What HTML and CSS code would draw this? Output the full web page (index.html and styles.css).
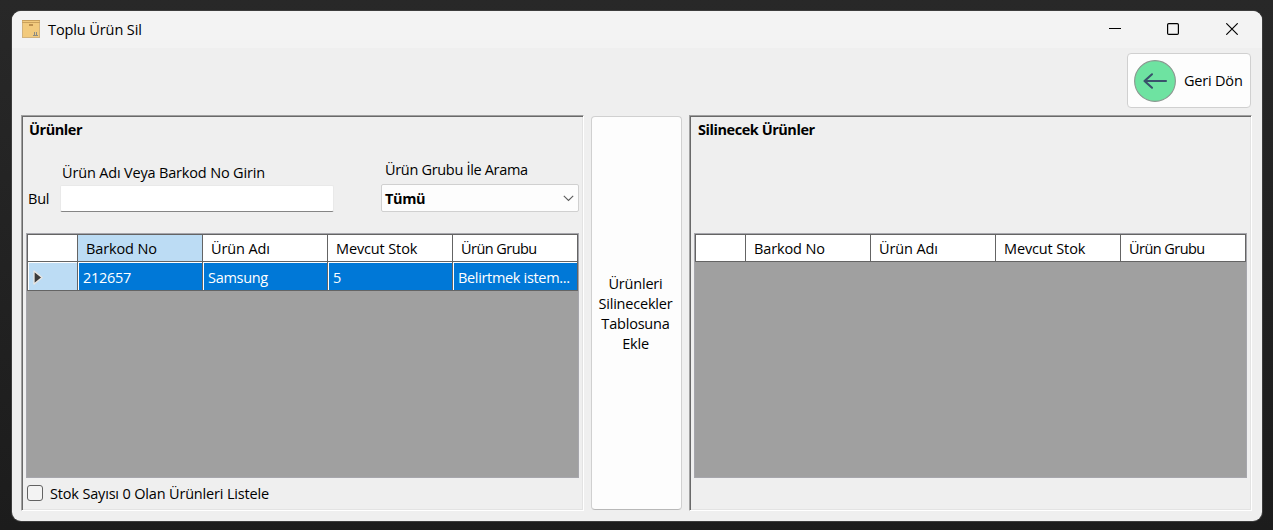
FILE: index.html
```
<!DOCTYPE html>
<html lang="tr">
<head>
<meta charset="utf-8">
<title>Toplu Ürün Sil</title>
<link rel="stylesheet" href="styles.css">
</head>
<body>
<div class="window">
  <header class="titlebar">
    <svg class="app-icon" width="18" height="18" viewBox="0 0 18 18">
      <rect x="0.5" y="0.5" width="17" height="17" fill="#f2ca7d" stroke="#d2b27c"/>
      <path d="M0 .5H18M0 2.5H18" stroke="#c9a05c"/>
      <path d="M7 5H11" stroke="#bd9150" stroke-width="2"/>
      <path d="M11 15.5H16M12.5 15V12M14.5 15V12" stroke="#8c8b83"/>
    </svg>
    <span class="title">Toplu Ürün Sil</span>
    <div class="controls">
      <svg width="12" height="12" viewBox="0 0 12 12"><path d="M0 5.5H12" stroke="#000"/></svg>
      <svg width="12" height="12" viewBox="0 0 12 12"><rect x=".6" y=".6" width="10.8" height="10.8" rx="1.2" fill="none" stroke="#000" stroke-width="1.2"/></svg>
      <svg width="12" height="12" viewBox="0 0 12 12"><path d="M.3 .3L11.7 11.7M11.7 .3L.3 11.7" stroke="#000" stroke-width="1.15"/></svg>
    </div>
  </header>
  <div class="toolbar">
    <button class="back">
      <svg width="42" height="42" viewBox="0 0 42 42">
        <circle cx="21" cy="21" r="20.4" fill="#6ee3a1" stroke="#8b9790" stroke-width="1.1"/>
        <path d="M32 21H10.5M18 14.3L10.5 21L18 27.7" fill="none" stroke="#39526b" stroke-width="2.1" stroke-linecap="round" stroke-linejoin="round"/>
      </svg>
      <span>Geri Dön</span>
    </button>
  </div>
  <main class="content">
    <section class="panel">
      <h2 class="panel-title">Ürünler</h2>
      <div class="filters">
        <span class="find">Bul</span>
        <div class="field search">
          <label for="q">Ürün Adı Veya Barkod No Girin</label>
          <input id="q" class="input" type="text">
        </div>
        <div class="field group">
          <label>Ürün Grubu İle Arama</label>
          <div class="select">
            <span>Tümü</span>
            <svg width="11" height="7" viewBox="0 0 11 7"><path d="M.8 .9L5.5 5.5L10.2 .9" fill="none" stroke="#5c5c5c" stroke-width="1.1"/></svg>
          </div>
        </div>
      </div>
      <div class="grid">
        <div class="row head">
          <div></div><div class="sorted">Barkod No</div><div>Ürün Adı</div><div>Mevcut Stok</div><div class="group-head">Ürün Grubu</div>
        </div>
        <div class="row data">
          <div class="marker"><svg width="10" height="15" viewBox="0 0 10 15"><path d="M1 1L9 7.5L1 14Z" fill="#3b3b3b" stroke="#e9e6e2" stroke-width="1.3" stroke-linejoin="round"/></svg></div>
          <div>212657</div><div>Samsung</div><div>5</div><div class="group-cell">Belirtmek istem...</div>
        </div>
      </div>
      <label class="check"><span class="box"></span><span class="check-text">Stok Sayısı 0 Olan Ürünleri Listele</span></label>
    </section>
    <button class="transfer">Ürünleri<br>Silinecekler<br>Tablosuna<br>Ekle</button>
    <section class="panel">
      <h2 class="panel-title target-title">Silinecek Ürünler</h2>
      <div class="filters"></div>
      <div class="grid">
        <div class="row head">
          <div></div><div>Barkod No</div><div>Ürün Adı</div><div>Mevcut Stok</div><div class="group-head">Ürün Grubu</div>
        </div>
      </div>
    </section>
  </main>
</div>
</body>
</html>
```
FILE: styles.css
```
* { box-sizing: border-box; }
body {
  margin: 0;
  height: 530px;
  overflow: hidden;
  padding: 11px 11px 9px 12px;
  background: linear-gradient(#282828, #1c1c1c);
  font: 14.5px/20px "Open Sans", "Noto Sans", sans-serif;
  letter-spacing: -0.2px;
  color: #000;
}
.window {
  display: flex;
  flex-direction: column;
  width: 1250px;
  height: 510px;
  border-radius: 9px;
  overflow: hidden;
  background: #efefef;
  box-shadow: 0 0 0 1px #3c3c3c;
}
.titlebar {
  display: flex;
  align-items: center;
  height: 37px;
  padding: 0 24px 1px 10px;
  background: #f3f3f3;
}
.title { margin-left: 8px; padding-top: 2px; letter-spacing: -0.1px; }
.controls { display: flex; gap: 47px; margin-left: auto; }
.controls svg { display: block; }
.controls svg:first-child { margin-right: -1px; }
.toolbar { display: flex; justify-content: flex-end; padding: 5px 11px 0 0; height: 67px; }
button { font: inherit; letter-spacing: inherit; color: inherit; background: #fdfdfd; border: 1px solid #d0d0d0; border-radius: 4px; }
.back { display: flex; align-items: center; gap: 8px; width: 124px; height: 55px; padding: 0 0 0 6px; white-space: nowrap; }
.content { display: flex; padding: 0 10px 0 9px; height: 396px; }
.panel {
  width: 563px;
  height: 396px;
  padding: 4px;
  border: 1px solid;
  border-color: #a0a0a0 #fff #fff #a0a0a0;
  box-shadow: inset 1px 1px #696969, inset -1px -1px #e3e3e3;
}
.panel-title { margin: 0 0 0 3px; font-size: 14.5px; line-height: 20px; font-weight: 700; letter-spacing: -0.45px; }
.target-title { margin-left: 4px; }
.filters { display: flex; align-items: flex-end; height: 93px; padding-bottom: 21px; }
.find { width: 34px; padding-left: 2px; margin-bottom: 3px; }
.field { display: flex; flex-direction: column; }
.search { width: 274px; }
.search label { margin: 0 0 2px 2px; letter-spacing: -0.17px; }
.input { display: block; width: 274px; height: 27px; border: 1px solid #e9e9e9; border-bottom-color: #858585; border-radius: 2px; background: #fff; padding: 0; }
.group { width: 198px; margin-left: 47px; }
.group label { margin: 0 0 4px 4px; letter-spacing: -0.32px; }
.select { display: flex; align-items: center; justify-content: space-between; height: 28px; padding: 1px 4px 0 3px; border: 1px solid #d0d0d0; border-radius: 2px; background: #fdfdfd; font-weight: 700; letter-spacing: -0.4px; }
.grid { width: 553px; height: 245px; border: 1px solid #a6a6ac; background: #a0a0a0; }
.row { display: grid; grid-template-columns: 51px 125px 125px 125px 125px; width: 551px; }
.row > div { display: flex; align-items: center; border-right: 1px solid #646464; border-bottom: 1px solid #646464; white-space: nowrap; }
.row > div:first-child { border-left: 1px solid #646464; }
.head > div { height: 28px; padding: 1px 0 0 8px; background: #fff; border-top: 1px solid #646464; letter-spacing: -0.13px; }
.head .group-head { letter-spacing: -0.55px; }
.head .sorted { background: #bcdcf4; }
.data > div { height: 29px; padding: 3px 0 0 5px; color: #fff; background: #0078d7; box-shadow: inset 1px 1px #fff; letter-spacing: -0.3px; }
.data .group-cell { letter-spacing: -0.33px; }
.data .marker { background: #bcdcf4; padding: 2px 0 0 5px; }
.check { display: flex; align-items: center; gap: 7px; margin-top: 5px; padding-left: 1px; letter-spacing: -0.17px; }
.check-text { position: relative; top: 1px; }
.box { width: 16px; height: 16px; border: 1px solid #626262; border-radius: 3px; background: #f3f3f3; }
.transfer { width: 91px; height: 394px; margin: 1px 7px 0 7px; padding: 2px 2px 0 0; line-height: 20px; border-bottom-color: #b8b8b8; }
```
